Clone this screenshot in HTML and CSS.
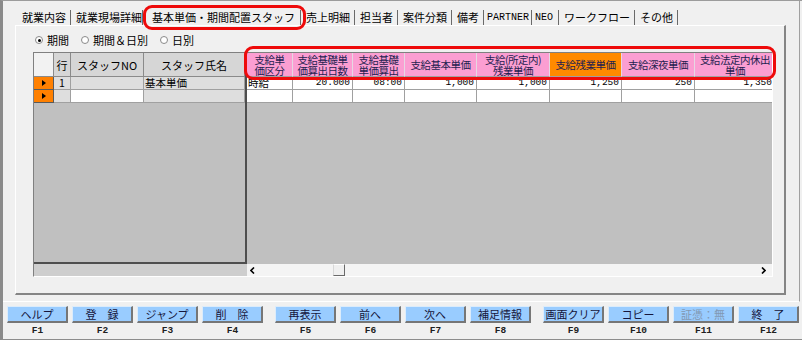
FILE: index.html
```html
<!DOCTYPE html>
<html lang="ja">
<head>
<meta charset="utf-8">
<title>基本単価・期間配置スタッフ</title>
<link rel="stylesheet" href="styles.css">
</head>
<body>
<div class="frame">
  <div class="main">
    <div class="tabs">
      <div class="tab tab-first">就業内容</div>
      <div class="tab tab-before">就業現場詳細</div>
      <div class="tab tab-active">基本単価・期間配置スタッフ</div>
      <div class="tab">売上明細</div>
      <div class="tab">担当者</div>
      <div class="tab">案件分類</div>
      <div class="tab">備考</div>
      <div class="tab tab-latin">PARTNER</div>
      <div class="tab tab-latin tab-neo">NEO</div>
      <div class="tab">ワークフロー</div>
      <div class="tab">その他</div>
    </div>
    <div class="panel">
      <div class="radios">
        <label class="radio"><span class="dot dot-on"></span>期間</label>
        <label class="radio"><span class="dot"></span>期間＆日別</label>
        <label class="radio"><span class="dot"></span>日別</label>
      </div>
      <div class="grid">
        <div class="grid-body">
          <div class="fixed">
            <div class="fgrid">
              <div class="c hc hc-ind"></div>
              <div class="c hc">行</div>
              <div class="c hc">スタッフNO</div>
              <div class="c hc">スタッフ氏名</div>

              <div class="c ind"><span class="tri"></span></div>
              <div class="c fc center">1</div>
              <div class="c fc"></div>
              <div class="c fc">基本単価</div>

              <div class="c ind"><span class="tri"></span></div>
              <div class="c fc"></div>
              <div class="c dc"></div>
              <div class="c fc"></div>
            </div>
          </div>
          <div class="scroll">
            <div class="sgrid">
              <div class="c ph"><span>支給単</span><span>価区分</span></div>
              <div class="c ph"><span>支給基礎単</span><span>価算出日数</span></div>
              <div class="c ph"><span>支給基礎</span><span>単価算出</span></div>
              <div class="c ph"><span>支給基本単価</span></div>
              <div class="c ph"><span>支給(所定内)</span><span>残業単価</span></div>
              <div class="c ph ph-orange"><span>支給残業単価</span></div>
              <div class="c ph"><span>支給深夜単価</span></div>
              <div class="c ph ph-last"><span>支給法定内休出</span><span>単価</span></div>

              <div class="c dc">時給</div>
              <div class="c dc num">20.000</div>
              <div class="c dc num">08:00</div>
              <div class="c dc num">1,000</div>
              <div class="c dc num">1,000</div>
              <div class="c dc num">1,250</div>
              <div class="c dc num">250</div>
              <div class="c dc num">1,350</div>

              <div class="c dc"></div>
              <div class="c dc"></div>
              <div class="c dc"></div>
              <div class="c dc"></div>
              <div class="c dc"></div>
              <div class="c dc"></div>
              <div class="c dc"></div>
              <div class="c dc"></div>
            </div>
          </div>
        </div>
        <div class="hscroll">
          <div class="hs-fixed"></div>
          <div class="hs-bar">
            <svg class="hs-arrow" width="5" height="7" viewBox="0 0 5 7"><polyline points="4,0.5 1,3.5 4,6.5" fill="none" stroke="#000" stroke-width="1.6"/></svg>
            <span class="hs-track"><span class="hs-thumb"></span></span>
            <svg class="hs-arrow" width="5" height="7" viewBox="0 0 5 7"><polyline points="1,0.5 4,3.5 1,6.5" fill="none" stroke="#000" stroke-width="1.6"/></svg>
          </div>
        </div>
      </div>
    </div>
  </div>
  <div class="fbar">
    <div class="fgroup">
      <div class="fkey"><div class="btn">ヘルプ</div><div class="flabel">F1</div></div>
      <div class="fkey"><div class="btn">登　録</div><div class="flabel">F2</div></div>
      <div class="fkey"><div class="btn">ジャンプ</div><div class="flabel">F3</div></div>
      <div class="fkey"><div class="btn">削　除</div><div class="flabel">F4</div></div>
    </div>
    <div class="fgroup">
      <div class="fkey"><div class="btn">再表示</div><div class="flabel">F5</div></div>
      <div class="fkey"><div class="btn">前へ</div><div class="flabel">F6</div></div>
      <div class="fkey"><div class="btn">次へ</div><div class="flabel">F7</div></div>
      <div class="fkey"><div class="btn">補足情報</div><div class="flabel">F8</div></div>
    </div>
    <div class="fgroup">
      <div class="fkey"><div class="btn">画面クリア</div><div class="flabel">F9</div></div>
      <div class="fkey"><div class="btn">コピー</div><div class="flabel">F10</div></div>
      <div class="fkey"><div class="btn btn-off">証憑：無</div><div class="flabel">F11</div></div>
      <div class="fkey"><div class="btn">終　了</div><div class="flabel">F12</div></div>
    </div>
  </div>
  <div class="mark mark-tab"></div>
  <div class="mark mark-head"></div>
</div>
</body>
</html>
```

FILE: styles.css
```css
html, body {
  margin: 0;
  padding: 0;
  background: #f0f0f0;
  overflow: hidden;
}

body {
  font-family: "Noto Sans CJK JP", "Noto Sans", sans-serif;
  font-size: 11px;
  line-height: 13px;
  color: #000;
}

.frame {
  position: relative;
  width: 802px;
  height: 340px;
  box-sizing: border-box;
  border-left: 3px solid #8a8a8a;
  border-top: 1px solid #9c9c9c;
  border-bottom: 1px solid #8c8c8c;
}

.main {
  width: 797px;
  box-sizing: border-box;
  border-right: 1px solid #a0a0a0;
  border-bottom: 1px solid #ffffff;
  padding-bottom: 6px;
}

/* ---------- tabs ---------- */
.tabs {
  display: flex;
  align-items: flex-end;
  height: 24px;
  padding-left: 14px;
}

.tab {
  height: 15px;
  line-height: 15px;
  padding: 0 4px 0 5px;
  border-right: 1px solid #6a6a6a;
  white-space: nowrap;
}

.tab-before {
  padding-right: 0;
}

.tab-active {
  padding: 0 5px 0 9px;
}

.tab-latin {
  font-family: "Liberation Mono", monospace;
  font-size: 10px;
  padding: 0 2px 0 3px;
}

.tab-neo {
  padding-right: 5px;
}

/* ---------- panel ---------- */
.panel {
  margin-left: 12px;
  width: 771px;
  height: 270px;
  box-sizing: border-box;
  border-top: 1px solid #ffffff;
  border-left: 1px solid #ffffff;
  border-right: 2px solid #858585;
  border-bottom: 2px solid #858585;
}

.radios {
  display: flex;
  gap: 12px;
  height: 14px;
  margin: 7px 0 0 19px;
  line-height: 14px;
}

.radio {
  display: flex;
  align-items: center;
}

.dot {
  width: 8px;
  height: 8px;
  box-sizing: border-box;
  border: 1px solid #8a8a8a;
  border-radius: 50%;
  background: #ffffff;
  margin-right: 4px;
  display: flex;
  align-items: center;
  justify-content: center;
}

.dot-on::after {
  content: "";
  width: 3px;
  height: 3px;
  border-radius: 50%;
  background: #000;
}

/* ---------- grid ---------- */
.grid {
  margin: 5px 0 0 17px;
  width: 740px;
  height: 225px;
  box-sizing: border-box;
  border-left: 1px solid #808080;
  border-top: 1px solid #808080;
  border-right: 1px solid #ffffff;
  border-bottom: 1px solid #ffffff;
  display: flex;
  flex-direction: column;
}

.grid-body {
  display: flex;
  height: 211px;
  background: #c0c0c0;
}

.fixed {
  width: 213px;
  height: 211px;
  box-sizing: border-box;
  border-right: 2px solid #4e4e4e;
  border-bottom: 2px solid #4e4e4e;
}

.scroll {
  flex: 1;
  overflow: hidden;
}

.fgrid {
  display: grid;
  grid-template-columns: 20px 17px 73px 101px;
  grid-template-rows: 24px 13px 13px;
}

.sgrid {
  display: grid;
  grid-template-columns: 46px 60px 52px 72px 73px 72px 73px 80px;
  grid-template-rows: 24px 13px 13px;
  width: 528px;
}

.c {
  box-sizing: border-box;
  border-right: 1px solid #a0a0a0;
  border-bottom: 1px solid #a0a0a0;
  white-space: nowrap;
  font-size: 10.5px;
  line-height: 12px;
}

.hc {
  background: #d6d6d6;
  border-color: #8a8a8a;
  display: flex;
  align-items: center;
  justify-content: center;
  font-size: 11px;
}

.hc-ind {
  background: #f2f2f2;
}

.ind {
  background: #ff8000;
  border-right: 1px solid #5a5a5a;
  border-bottom: 1px solid #5a5a5a;
  display: flex;
  align-items: center;
  justify-content: center;
}

.tri {
  width: 0;
  height: 0;
  border-top: 3px solid transparent;
  border-bottom: 3px solid transparent;
  border-left: 4px solid #000;
}

.fc {
  background: #dedede;
  padding-left: 1px;
}

.center {
  text-align: center;
  padding-left: 0;
}

.dc {
  background: #ffffff;
  padding: 0 2px 0 1px;
}

.num {
  text-align: right;
  font-family: "Liberation Mono", monospace;
  font-size: 9.5px;
  line-height: 12px;
}

.ph {
  background: #fb9ed2;
  color: #1e1e50;
  border-right: 1px solid #e6d8e2;
  border-bottom: 1px solid #a0a0a0;
  display: flex;
  flex-direction: column;
  align-items: center;
  justify-content: center;
  text-align: center;
  letter-spacing: -0.5px;
  font-size: 10.5px;
  line-height: 11px;
  overflow: hidden;
}

.ph span {
  display: block;
  height: 11px;
}

.ph-orange {
  background: #ff8a00;
}

.ph-last {
  border-right: none;
}

/* ---------- horizontal scrollbar ---------- */
.hscroll {
  display: flex;
  height: 12px;
}

.hs-fixed {
  width: 213px;
  background: #cecece;
}

.hs-bar {
  flex: 1;
  display: flex;
  align-items: center;
  background: #f4f4f4;
  padding: 0 6px 0 3px;
}

.hs-track {
  flex: 1;
  height: 12px;
  padding-left: 78px;
}

.hs-thumb {
  display: block;
  width: 12px;
  height: 12px;
  box-sizing: border-box;
  background: #f0f0f0;
  border-top: 1px solid #ffffff;
  border-left: 1px solid #d8d8d8;
  border-right: 1px solid #6a6a6a;
  border-bottom: 1px solid #6a6a6a;
}

/* ---------- function key bar ---------- */
.fbar {
  display: flex;
  gap: 12px;
  padding: 4px 0 0 4px;
}

.fgroup {
  display: flex;
  gap: 4px;
}

.fkey {
  width: 61px;
  display: flex;
  flex-direction: column;
  align-items: center;
}

.btn {
  width: 61px;
  height: 17px;
  box-sizing: border-box;
  background: #99ccff;
  color: #16163c;
  border-top: 1px solid #dcecfb;
  border-left: 1px solid #dcecfb;
  border-right: 2px solid #767676;
  border-bottom: 2px solid #767676;
  text-align: center;
  line-height: 14px;
  white-space: nowrap;
}

.btn-off {
  color: #8298b2;
}

.flabel {
  margin-top: 3px;
  font-family: "Liberation Mono", monospace;
  font-size: 9.5px;
  font-weight: bold;
  line-height: 10px;
  color: #202020;
}

/* ---------- red annotation marks ---------- */
.mark {
  position: absolute;
  box-sizing: border-box;
  border: 3px solid #ee0a0a;
  border-radius: 9px;
}

.mark-tab {
  left: 140px;
  top: 4px;
  width: 163px;
  height: 25px;
}

.mark-head {
  left: 241px;
  top: 45px;
  width: 532px;
  height: 34px;
}
```
